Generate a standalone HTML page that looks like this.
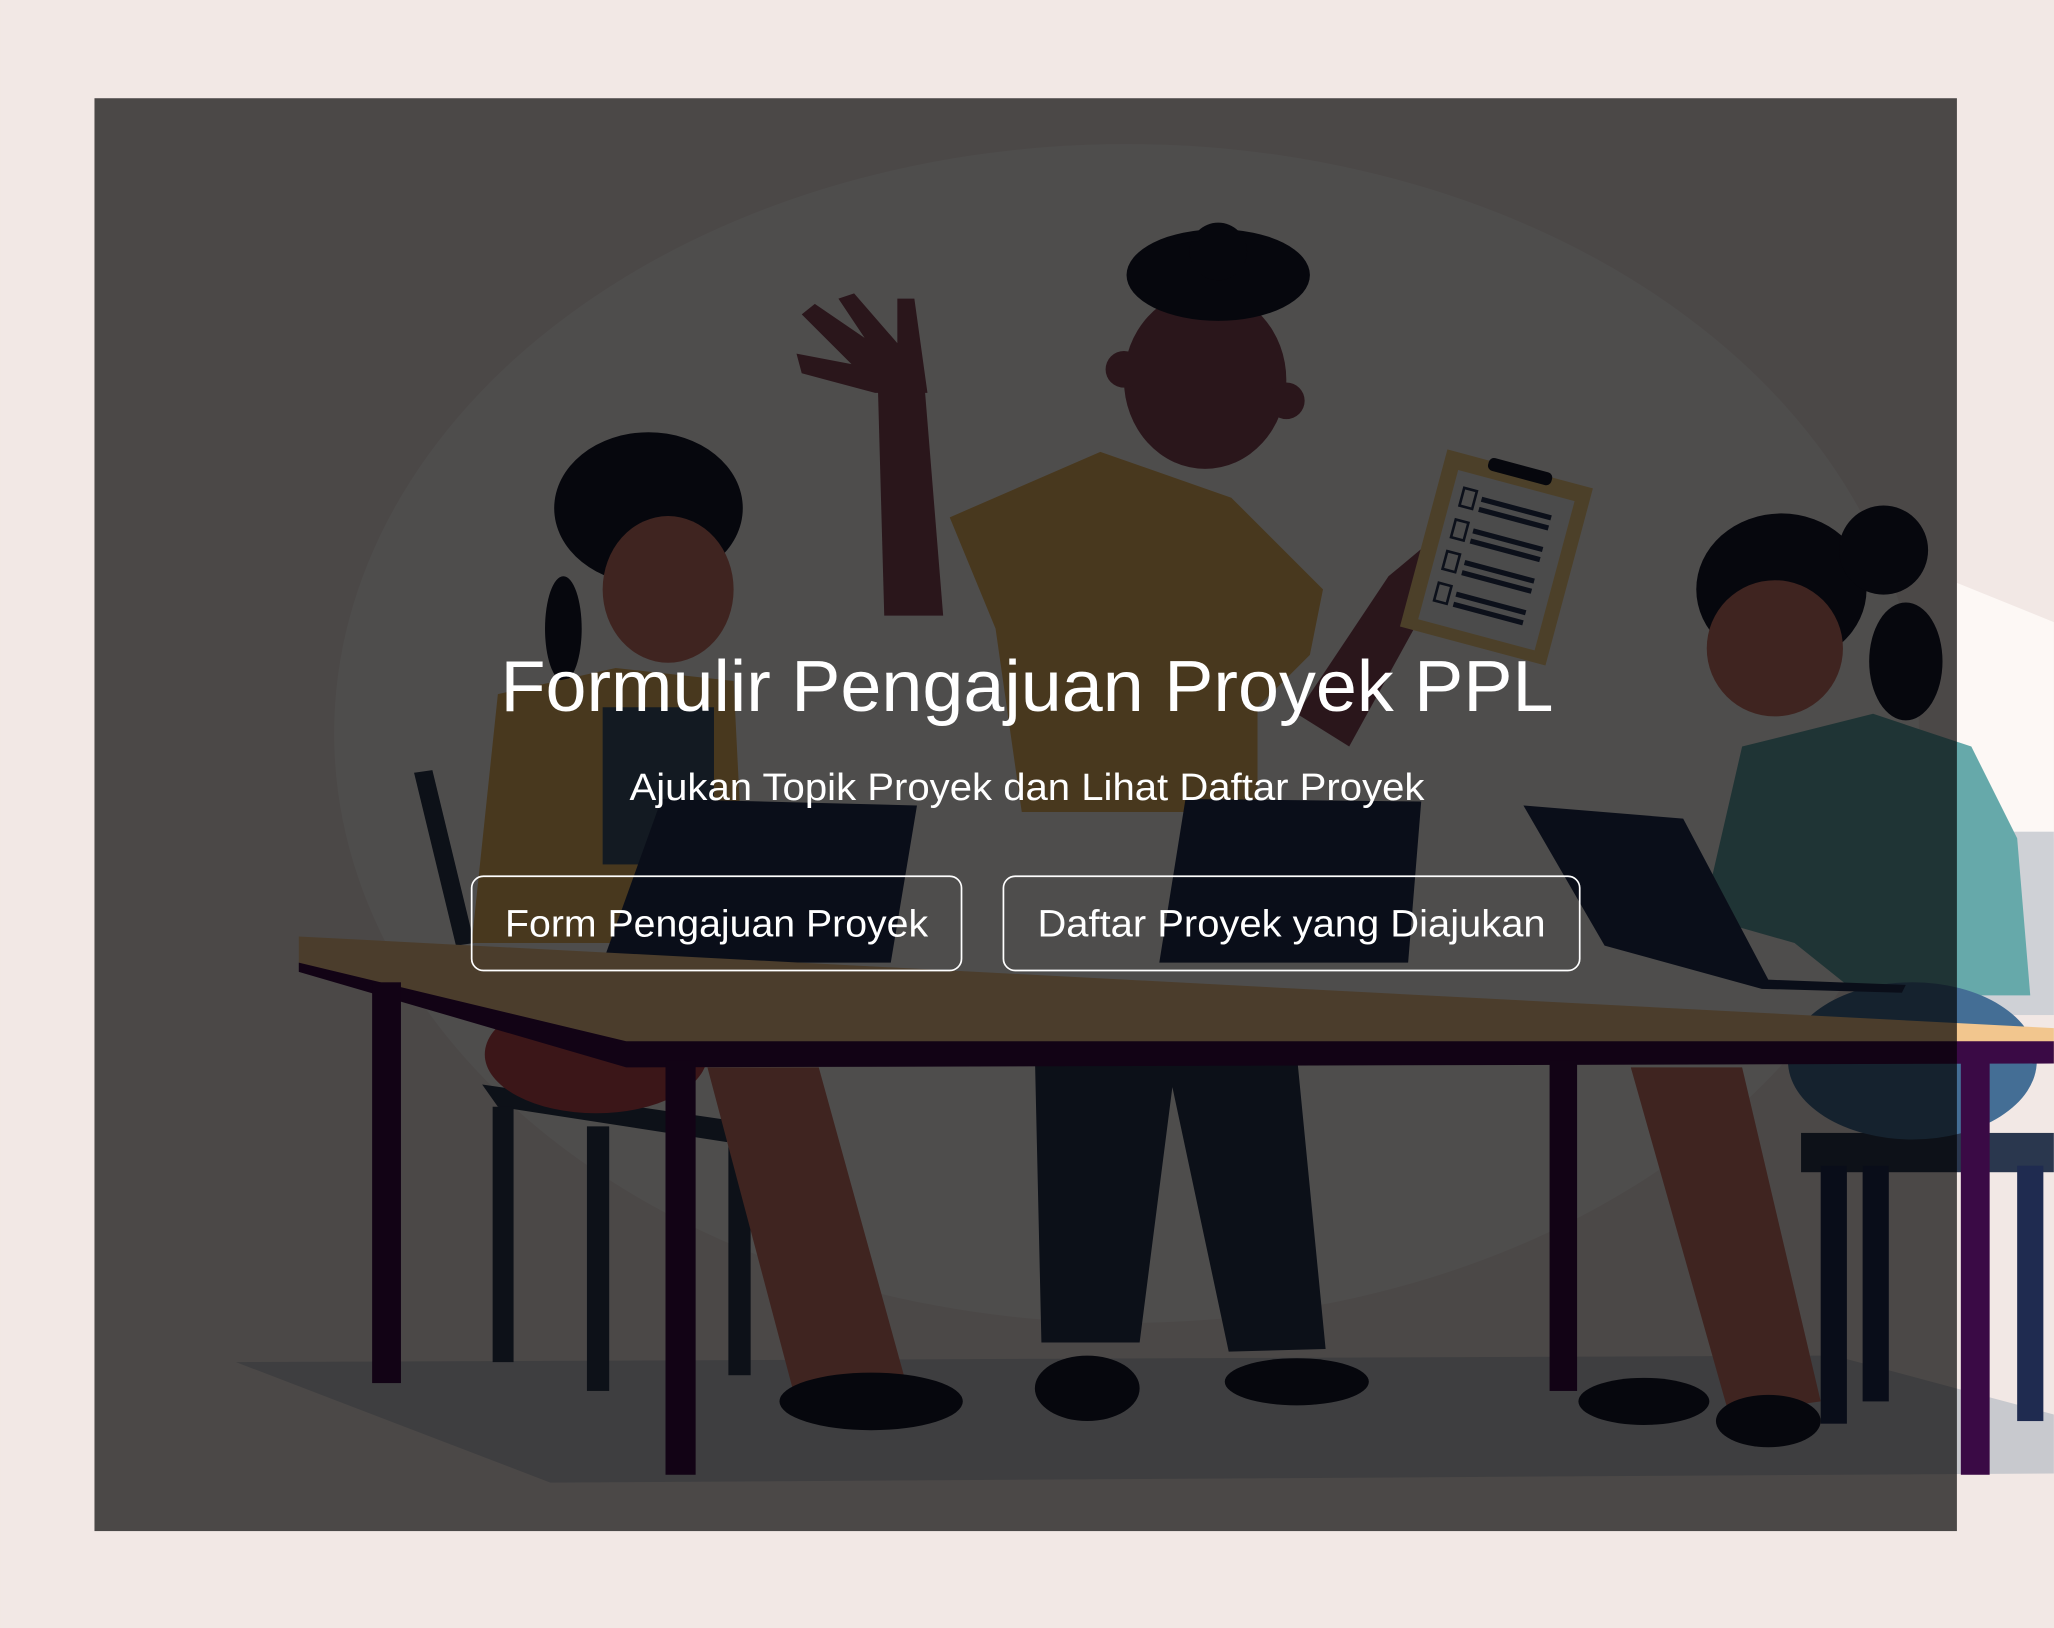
<!DOCTYPE html>
<html><head><meta charset="utf-8"><style>
html,body{margin:0;padding:0;background:#f2e8e5;width:2054px;height:1628px;overflow:hidden}
svg{display:block}
text{font-family:"Liberation Sans",sans-serif;fill:#fff}
</style></head><body>
<svg width="2054" height="1628" viewBox="0 0 1568 1243" xmlns="http://www.w3.org/2000/svg">
<rect x="0" y="0" width="1568" height="1243" fill="#f2e8e5"/>
<!-- background bulb -->
<ellipse cx="860" cy="560" rx="605" ry="450" fill="#fcf8f5"/>
<polygon points="1494,445 1568,475 1568,640 1494,635" fill="#fdf8f5"/>
<rect x="1494" y="635" width="74" height="140" fill="#cfd1d6"/>
<!-- floor shadow -->
<polygon points="180,1040 1400,1035 1568,1080 1568,1125 420,1132" fill="#c8c9ce"/>
<!-- left chair -->
<polygon points="316,590 330,588 362,720 348,722" fill="#2a374e"/>
<polygon points="368,828 555,855 555,872 380,845" fill="#2a374e"/>
<rect x="376" y="845" width="16" height="195" fill="#2a374e"/>
<rect x="448" y="860" width="17" height="202" fill="#2a374e"/>
<rect x="556" y="862" width="17" height="188" fill="#2a374e"/>
<!-- left woman -->
<ellipse cx="495" cy="388" rx="72" ry="58" fill="#14172a"/>
<ellipse cx="430" cy="480" rx="14" ry="40" fill="#14172a"/>
<ellipse cx="510" cy="450" rx="50" ry="56" fill="#cb7467"/>
<polygon points="380,530 470,510 560,520 570,720 360,720" fill="#e8b460"/>
<rect x="460" y="540" width="85" height="120" fill="#3d556e"/>
<ellipse cx="455" cy="805" rx="85" ry="45" fill="#bf474e"/>
<polygon points="540,815 625,815 690,1050 605,1060" fill="#cb7467"/>
<ellipse cx="665" cy="1070" rx="70" ry="22" fill="#14172a"/>
<!-- middle man -->
<polygon points="670,290 705,285 720,470 675,470" fill="#894759"/>
<path d="M668,300 L612,285 L608,270 L650,278 L612,240 L622,232 L660,258 L640,228 L652,224 L685,262 L685,228 L698,228 L708,300 Z" fill="#894759"/>
<ellipse cx="920" cy="290" rx="62" ry="68" fill="#894759"/>
<circle cx="858" cy="282" r="14" fill="#894759"/>
<circle cx="982" cy="306" r="14" fill="#894759"/>
<ellipse cx="930" cy="210" rx="70" ry="35" fill="#14172a"/>
<circle cx="930" cy="192" r="22" fill="#14172a"/>
<polygon points="725,395 840,345 940,380 1010,450 1000,500 960,540 960,620 780,620 760,480" fill="#e8b460"/>
<polygon points="990,545 1060,440 1090,415 1085,470 1030,570" fill="#894759"/>
<g transform="rotate(15 1140 425)"><rect x="1085" y="355" width="115" height="140" fill="#f5cf84"/><rect x="1097" y="368" width="92" height="118" fill="#f2f2f2"/>
<rect x="1118" y="352" width="50" height="10" rx="4" fill="#14172a"/>
<rect x="1105" y="380" width="10" height="14" fill="none" stroke="#273556" stroke-width="2"/><rect x="1120" y="383" width="55" height="4" fill="#273556"/><rect x="1120" y="391" width="55" height="4" fill="#273556"/>
<rect x="1105" y="405" width="10" height="14" fill="none" stroke="#273556" stroke-width="2"/><rect x="1120" y="408" width="55" height="4" fill="#273556"/><rect x="1120" y="416" width="55" height="4" fill="#273556"/>
<rect x="1105" y="430" width="10" height="14" fill="none" stroke="#273556" stroke-width="2"/><rect x="1120" y="433" width="55" height="4" fill="#273556"/><rect x="1120" y="441" width="55" height="4" fill="#273556"/>
<rect x="1105" y="455" width="10" height="14" fill="none" stroke="#273556" stroke-width="2"/><rect x="1120" y="458" width="55" height="4" fill="#273556"/><rect x="1120" y="466" width="55" height="4" fill="#273556"/></g>
<polygon points="790,805 990,805 1012,1030 938,1032 895,830 870,1025 795,1025" fill="#27344f"/>
<ellipse cx="830" cy="1060" rx="40" ry="25" fill="#14172a"/>
<ellipse cx="990" cy="1055" rx="55" ry="18" fill="#14172a"/>
<!-- right chair -->
<rect x="1375" y="865" width="193" height="30" fill="#2a374e"/>
<rect x="1390" y="890" width="20" height="197" fill="#1f2b50"/>
<rect x="1422" y="890" width="20" height="180" fill="#1f2b50"/>
<rect x="1540" y="890" width="20" height="195" fill="#1f2b50"/>
<!-- right woman -->
<ellipse cx="1360" cy="450" rx="65" ry="58" fill="#14172a"/>
<circle cx="1438" cy="420" r="34" fill="#14172a"/>
<ellipse cx="1455" cy="505" rx="28" ry="45" fill="#14172a"/>
<ellipse cx="1355" cy="495" rx="52" ry="52" fill="#cb7467"/>
<polygon points="1330,570 1430,545 1505,570 1540,640 1550,760 1420,760 1370,720 1300,700" fill="#66a9aa"/>
<ellipse cx="1460" cy="810" rx="95" ry="60" fill="#446e95"/>
<polygon points="1245,815 1330,815 1390,1070 1320,1080" fill="#cb7467"/>
<ellipse cx="1255" cy="1070" rx="50" ry="18" fill="#14172a"/>
<ellipse cx="1350" cy="1085" rx="40" ry="20" fill="#14172a"/>
<!-- laptops -->
<polygon points="505,610 700,615 680,735 460,735" fill="#232f52"/>
<polygon points="905,610 1085,612 1075,735 885,735" fill="#232f52"/>
<polygon points="1163,615 1285,625 1350,748 1455,752 1452,758 1345,755 1225,722" fill="#232f52"/>
<!-- table -->
<polygon points="228,715 1568,785 1568,812 478,812 228,735" fill="#f2c68e"/>
<polygon points="228,735 478,795 1568,795 1568,812 478,815 228,742" fill="#3a0a45"/>
<rect x="284" y="750" width="22" height="306" fill="#3a0a45"/>
<rect x="508" y="810" width="23" height="316" fill="#3a0a45"/>
<rect x="1183" y="810" width="21" height="252" fill="#3a0a45"/>
<rect x="1497" y="810" width="22" height="316" fill="#3a0a45"/>
<!-- overlay -->
<rect x="72" y="75" width="1422" height="1094" fill="rgba(0,0,0,0.69)"/>
<!-- text -->
<text x="784" y="543" font-size="55" text-anchor="middle" textLength="804" lengthAdjust="spacingAndGlyphs">Formulir Pengajuan Proyek PPL</text>
<text x="784" y="611" font-size="29" text-anchor="middle" textLength="607" lengthAdjust="spacingAndGlyphs">Ajukan Topik Proyek dan Lihat Daftar Proyek</text>
<rect x="360" y="669" width="374" height="72" rx="9" fill="none" stroke="#fff" stroke-width="1.3"/>
<rect x="766" y="669" width="440" height="72" rx="9" fill="none" stroke="#fff" stroke-width="1.3"/>
<text x="547" y="715" font-size="29" text-anchor="middle" textLength="323" lengthAdjust="spacingAndGlyphs">Form Pengajuan Proyek</text>
<text x="986" y="715" font-size="29" text-anchor="middle" textLength="388" lengthAdjust="spacingAndGlyphs">Daftar Proyek yang Diajukan</text>
</svg>
</body></html>
